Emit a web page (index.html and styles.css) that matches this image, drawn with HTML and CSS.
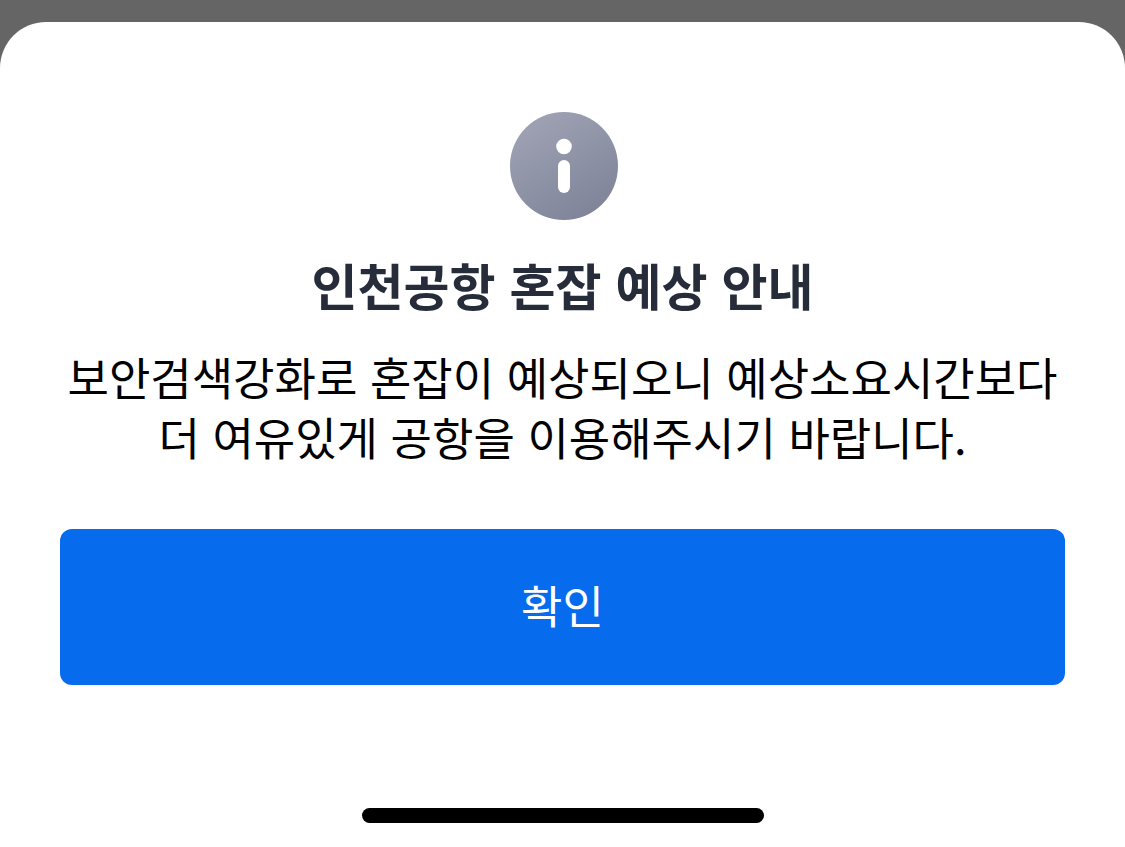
FILE: index.html
```html
<!DOCTYPE html>
<html lang="ko">
<head>
<meta charset="UTF-8">
<meta name="viewport" content="width=device-width, initial-scale=1.0">
<title>인천공항 혼잡 예상 안내</title>
<link rel="stylesheet" href="styles.css">
</head>
<body>
<div class="sheet" role="dialog" aria-labelledby="noticeTitle">
    <svg class="info-icon" viewBox="0 0 108 108" aria-hidden="true">
        <defs>
            <linearGradient id="infoFill" x1="0.15" y1="0" x2="0.75" y2="1">
                <stop offset="0" stop-color="#a0a4b5"/>
                <stop offset="1" stop-color="#7f8398"/>
            </linearGradient>
        </defs>
        <circle cx="54" cy="54" r="54" fill="url(#infoFill)"/>
        <circle cx="54" cy="34.5" r="7.8" fill="#fff"/>
        <rect x="48" y="48" width="12" height="33" rx="6" fill="#fff"/>
    </svg>
    <h1 class="title" id="noticeTitle">인천공항 혼잡 예상 안내</h1>
    <p class="message">보안검색강화로 혼잡이 예상되오니 예상소요시간보다<br>더 여유있게 공항을 이용해주시기 바랍니다.</p>
    <button type="button" class="confirm-button">확인</button>
    <div class="home-bar"></div>
</div>
</body>
</html>
```
FILE: styles.css
```css
* {
    box-sizing: border-box;
}

body {
    margin: 0;
    min-height: 100vh;
    display: flex;
    flex-direction: column;
    padding-top: 22px;
    background-color: #656566;
    font-family: "Noto Sans CJK KR", sans-serif;
}

.sheet {
    flex: 1;
    display: flex;
    flex-direction: column;
    align-items: center;
    padding: 90px 60px 24px;
    background-color: #fff;
    border-radius: 46px 46px 0 0;
}

.info-icon {
    width: 108px;
    height: 108px;
    margin-left: 3px;
}

.title {
    margin: 28px 0 0;
    font-size: 50px;
    font-weight: 700;
    line-height: 72px;
    color: #262c3a;
}

.message {
    margin: 27px 0 0;
    font-size: 45px;
    line-height: 60px;
    text-align: center;
    color: #000;
    white-space: nowrap;
}

.confirm-button {
    width: 100%;
    margin-top: 62px;
    padding: 46px 0 50px;
    border: none;
    border-radius: 12px;
    background-color: #066bed;
    color: #fff;
    font-family: inherit;
    font-size: 45px;
    line-height: 60px;
    cursor: pointer;
}

.home-bar {
    width: 402px;
    height: 15px;
    margin-top: auto;
    border-radius: 8px;
    background-color: #000;
}
```
